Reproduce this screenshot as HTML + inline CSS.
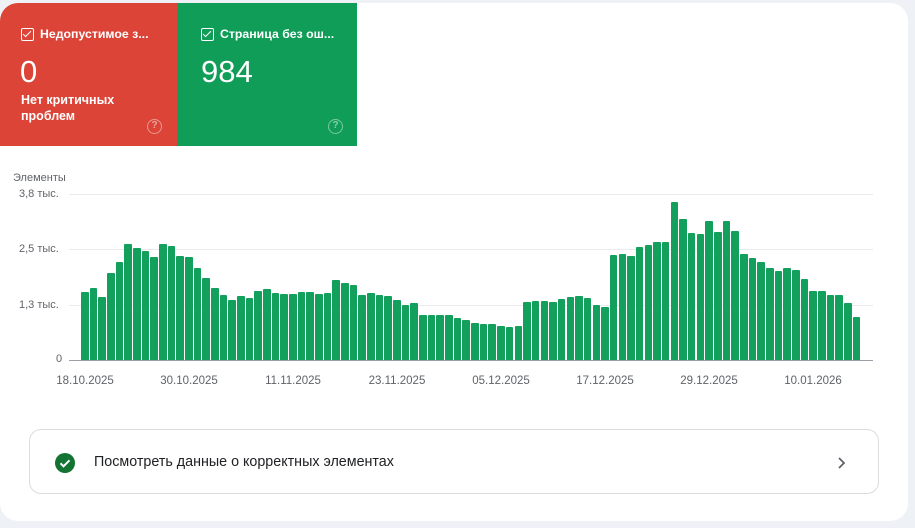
<!DOCTYPE html>
<html><head><meta charset="utf-8"><style>
*{margin:0;padding:0;box-sizing:border-box}
body{width:915px;height:528px;background:#eef2f6;font-family:"Liberation Sans",Roboto,"Noto Sans CJK SC",sans-serif;position:relative;overflow:hidden}
.card{position:absolute;left:0;top:3px;width:908px;height:518px;background:#fff;border-radius:18px;overflow:hidden}
.tile{position:absolute;top:0;height:143px;color:#fff}
.red{left:0;width:177px;background:#db4437}
.green{left:177px;width:180px;background:#109d58}
.hd{position:absolute;left:21px;top:24px;font-size:12.3px;font-weight:bold;display:flex;align-items:center;white-space:nowrap}
.cb{width:13px;height:13px;border:1.5px solid #fff;border-radius:2px;margin-right:6px;position:relative}
.cb:after{content:"";position:absolute;left:3px;top:0px;width:3px;height:7px;border:solid #fff;border-width:0 1.5px 1.5px 0;transform:rotate(45deg)}
.num{position:absolute;left:20px;top:51px;font-size:31px}
.sub{position:absolute;left:21px;top:89px;font-size:12.5px;font-weight:bold;line-height:16px}
.q{position:absolute;width:15px;height:15px;border:1.5px solid rgba(255,255,255,.45);border-radius:50%;font-size:10px;font-weight:bold;color:rgba(255,255,255,.5);text-align:center;line-height:12px;top:116px}
.lbl{position:absolute;font-size:11px;color:#5f6368}
.grid{position:absolute;left:69px;width:804px;height:1px;background:#e8eaed}
.bar{position:absolute;width:7.6px;background:#12a05c;border-radius:1px 1px 0 0}
.xl{position:absolute;top:375px;font-size:11.5px;color:#5f6368;width:80px;text-align:center}
.btn{position:absolute;left:29px;top:429px;width:850px;height:65px;border:1px solid #dadce0;border-radius:12px}
</style></head><body>
<div class="card">
<div class="tile red"><div class="hd"><span class="cb"></span>Недопустимое з...</div><div class="num">0</div><div class="sub">Нет критичных<br>проблем</div><div class="q" style="left:147px">?</div></div>
<div class="tile green"><div class="hd" style="left:24px"><span class="cb"></span>Страница без ош...</div><div class="num" style="left:24px">984</div><div class="q" style="left:151px">?</div></div>
</div>
<div class="lbl" style="left:13px;top:172px">Элементы</div>
<div class="lbl" style="left:19px;top:188px">3,8 тыс.</div>
<div class="lbl" style="left:19px;top:243px">2,5 тыс.</div>
<div class="lbl" style="left:19px;top:299px">1,3 тыс.</div>
<div class="lbl" style="left:56px;top:353px">0</div>
<div class="grid" style="top:194px"></div>
<div class="grid" style="top:249px"></div>
<div class="grid" style="top:305px"></div>
<div class="grid" style="top:360px;background:#9aa0a6"></div>
<div id="bars"></div>
<div class="xl" style="left:45px">18.10.2025</div>
<div class="xl" style="left:149px">30.10.2025</div>
<div class="xl" style="left:253px">11.11.2025</div>
<div class="xl" style="left:357px">23.11.2025</div>
<div class="xl" style="left:461px">05.12.2025</div>
<div class="xl" style="left:565px">17.12.2025</div>
<div class="xl" style="left:669px">29.12.2025</div>
<div class="xl" style="left:773px">10.01.2026</div>
<div class="btn">
<svg style="position:absolute;left:25px;top:23px" width="20" height="20" viewBox="0 0 20 20"><circle cx="10" cy="10" r="10" fill="#137333"/><path d="M5.5 10.3l3 3 6-6" stroke="#fff" stroke-width="2" fill="none"/></svg>
<div style="position:absolute;left:64px;top:24px;font-size:14.3px;color:#202124">Посмотреть данные о корректных элементах</div>
<svg style="position:absolute;left:806px;top:26px" width="12" height="14" viewBox="0 0 12 14"><path d="M3 2l5 5-5 5" stroke="#5f6368" stroke-width="1.8" fill="none"/></svg>
</div>
<script>
var t=[292,288,297,273,262,244,248,251,257,244,246,256,257,268,278,288,295,300,296,298,291,289,293,294,294,292,292,294,293,280,283,285,295,293,295,296,300,305,303,315,315,315,315,318,320,323,324,324,326,327,326,302,301,301,302,299,297,296,298,305,307,255,254,256,247,245,242,242,202,219,233,234,221,232,221,231,254,258,262,268,271,268,270,279,291,291,295,295,303,317];
var h='';for(var i=0;i<t.length;i++){h+='<div class="bar" style="left:'+(81+i*8.67).toFixed(2)+'px;top:'+t[i]+'px;height:'+(360-t[i])+'px"></div>';}
document.getElementById('bars').innerHTML=h;
</script>
</body></html>
